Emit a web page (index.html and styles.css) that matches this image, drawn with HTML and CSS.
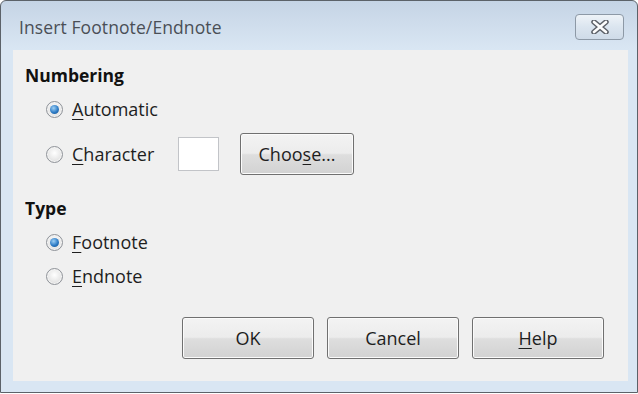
FILE: index.html
```html
<!DOCTYPE html>
<html lang="en">
<head>
<meta charset="UTF-8">
<title>Insert Footnote/Endnote</title>
<link rel="stylesheet" href="styles.css">
</head>
<body>
<div class="window">
  <div class="titlebar">
    <span class="title">Insert Footnote/Endnote</span>
    <button class="close-btn" aria-label="Close">
      <svg width="20" height="14" viewBox="0 0 20 14">
        <path d="M4 2 L16 12 M16 2 L4 12" stroke="#5d6168" stroke-width="5.5" stroke-linecap="round"/>
        <path d="M4 2 L16 12 M16 2 L4 12" stroke="#fdfdfd" stroke-width="2.6" stroke-linecap="round"/>
      </svg>
    </button>
  </div>
  <div class="frame">
    <div class="content">
      <div class="row heading">Numbering</div>
      <label class="row option"><span class="radio checked"></span><span><u>A</u>utomatic</span></label>
      <div class="row option char-row">
        <span class="radio"></span><span class="char-label"><u>C</u>haracter</span>
        <span class="char-box"></span>
        <button class="btn choose">Choo<u>s</u>e...</button>
      </div>
      <div class="row heading type">Type</div>
      <label class="row option"><span class="radio checked"></span><span><u>F</u>ootnote</span></label>
      <label class="row option"><span class="radio"></span><span><u>E</u>ndnote</span></label>
      <div class="actions">
        <button class="btn">OK</button>
        <button class="btn">Cancel</button>
        <button class="btn"><u>H</u>elp</button>
      </div>
    </div>
  </div>
</div>
</body>
</html>
```

FILE: styles.css
```css
body {
  margin: 0;
  background: #ffffff;
  font-family: "Open Sans", "Noto Sans", sans-serif;
}
.window {
  width: 638px;
  height: 393px;
  box-sizing: border-box;
  border: 1px solid #5c6269;
  border-radius: 6px 6px 0 0;
  background: linear-gradient(#c5d4e5, #d9e6f3 48px, #d9e6f3);
  display: flex;
  flex-direction: column;
}
.titlebar {
  height: 49px;
  flex: none;
  display: flex;
  align-items: center;
  justify-content: space-between;
  padding: 0 13px 0 18px;
}
.title {
  font-size: 17.5px;
  color: #4a4f56;
  margin-top: 3px;
  letter-spacing: 0.1px;
}
.close-btn {
  width: 49px;
  height: 26px;
  margin-top: 2px;
  border: 1px solid #8d99a6;
  border-radius: 4px;
  background: linear-gradient(#eef3f8, #dbe5ef 50%, #cfdbe8);
  display: flex;
  align-items: center;
  justify-content: center;
  padding: 0;
}
.frame {
  flex: 1;
  padding: 0 9px 11px 12px;
  display: flex;
}
.content {
  flex: 1;
  background: #f0f0f0;
  padding: 8px 24px 22px 12px;
  display: flex;
  flex-direction: column;
  font-size: 18px;
  color: #1e1e1e;
}
.row {
  height: 34px;
  display: flex;
  align-items: center;
}
.heading {
  font-weight: bold;
  font-size: 17.5px;
  color: #111;
}
.heading.type {
  margin-top: 15px;
}
.option {
  padding-left: 21px;
}
.option u {
  text-underline-offset: 3px;
}
.radio {
  width: 17px;
  height: 17px;
  box-sizing: border-box;
  border: 1px solid #8f9399;
  border-radius: 50%;
  background: radial-gradient(circle at 50% 40%, #ffffff, #e6e6e6 60%, #cfcfcf);
  box-shadow: inset 0 0 0 1px #f4f4f4;
  margin-right: 9px;
  position: relative;
  flex: none;
}
.radio.checked::after {
  content: "";
  position: absolute;
  left: 3px;
  top: 3px;
  width: 9px;
  height: 9px;
  border-radius: 50%;
  background: radial-gradient(circle at 40% 35%, #9ed0f5, #2d7bc5 55%, #124b86);
}
.char-row {
  height: 44px;
  margin-top: 6px;
}
.char-label {
  width: 82px;
}
.char-box {
  width: 41px;
  height: 34px;
  background: #ffffff;
  border: 1px solid #c2c4c8;
  margin-left: 24px;
  box-sizing: border-box;
}
.btn {
  width: 132px;
  height: 42px;
  border: 1px solid #707070;
  border-radius: 3px;
  background: linear-gradient(#f3f3f3, #ececec 48%, #dedede 52%, #d2d2d2);
  box-shadow: inset 0 0 0 1px #fbfbfb;
  font-family: inherit;
  font-size: 18px;
  color: #1e1e1e;
  padding: 0;
}
.btn u {
  text-underline-offset: 3px;
}
.btn.choose {
  width: 114px;
  margin-left: 21px;
}
.actions {
  margin-top: auto;
  display: flex;
  justify-content: flex-end;
  gap: 13px;
}
```
